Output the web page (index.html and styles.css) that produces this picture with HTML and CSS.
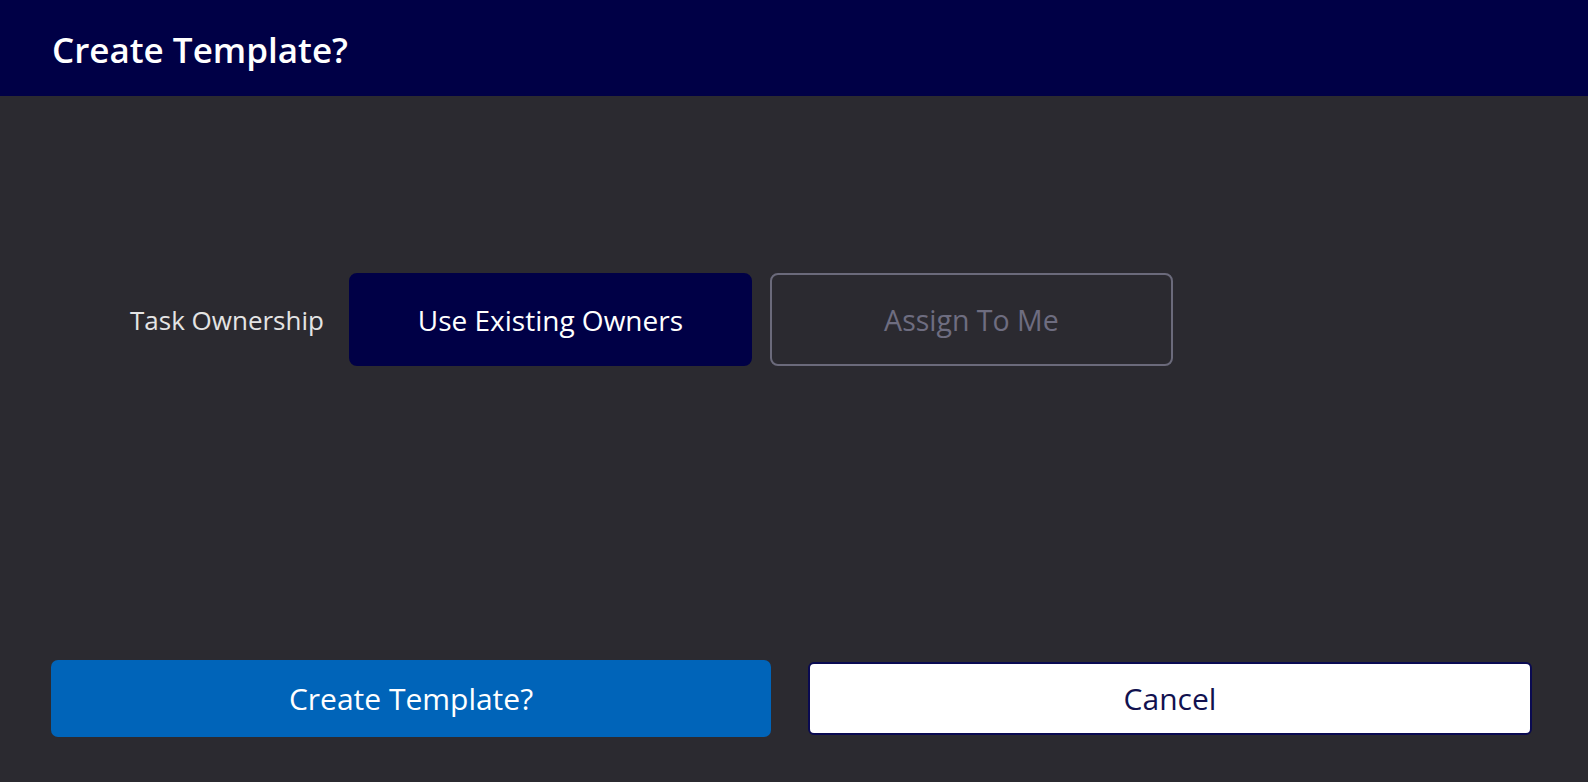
FILE: index.html
```html
<!DOCTYPE html>
<html lang="en">
<head>
    <meta charset="UTF-8">
    <meta name="viewport" content="width=device-width, initial-scale=1.0">
    <title>Create Template?</title>
    <link rel="stylesheet" href="styles.css">
</head>
<body>
    <div class="dialogo">
        <div class="cabecera">
            <h1>Create Template?</h1>
        </div>

        <div class="cuerpo">
            <div class="fila">
                <span class="etiqueta">Task Ownership</span>
                <button class="opcion activa">Use Existing Owners</button>
                <button class="opcion">Assign To Me</button>
            </div>
        </div>

        <div class="pie">
            <button class="btn-crear">Create Template?</button>
            <button class="btn-cancelar">Cancel</button>
        </div>
    </div>
</body>
</html>
```

FILE: styles.css
```css
html, body{
    margin: 0;
    height: 100%;
}
body{
    font-family: 'Open Sans', 'Noto Sans', sans-serif;
    background: #2b2a30;
    color: #e6e6e6;
}
button{
    font-family: inherit;
    cursor: pointer;
}
.dialogo{
    display: flex;
    flex-direction: column;
    height: 100%;
}
.cabecera{
    background: #000046;
    height: 96px;
    display: flex;
    align-items: center;
    padding-left: 52px;
    box-sizing: border-box;
}
.cabecera h1{
    margin: 0;
    font-size: 35px;
    font-weight: 600;
    color: #ffffff;
    padding-top: 2px;
}
.cuerpo{
    flex: 1;
    padding: 177px 0 0 130px;
}
.fila{
    display: flex;
    align-items: center;
}
.etiqueta{
    font-size: 26px;
    color: #e4e4e4;
    margin-right: 25px;
}
.opcion{
    width: 403px;
    height: 93px;
    border-radius: 8px;
    font-size: 28.5px;
    background: transparent;
    border: 2px solid #6b6a7b;
    color: #6e6d80;
    margin-right: 18px;
}
.opcion.activa{
    background: #000046;
    border-color: #000046;
    color: #ffffff;
    font-weight: 500;
    font-size: 28px;
}
.pie{
    display: flex;
    align-items: center;
    gap: 37px;
    padding: 0 56px 45px 51px;
}
.btn-crear, .btn-cancelar{
    flex: 1;
    font-size: 30px;
}
.btn-crear{
    height: 77px;
    border: none;
    border-radius: 7px;
    background: #0064b9;
    color: #ffffff;
    font-weight: 500;
}
.btn-cancelar{
    height: 73px;
    border: 2px solid #0a0a52;
    border-radius: 6px;
    background: #ffffff;
    color: #11114f;
}
```
